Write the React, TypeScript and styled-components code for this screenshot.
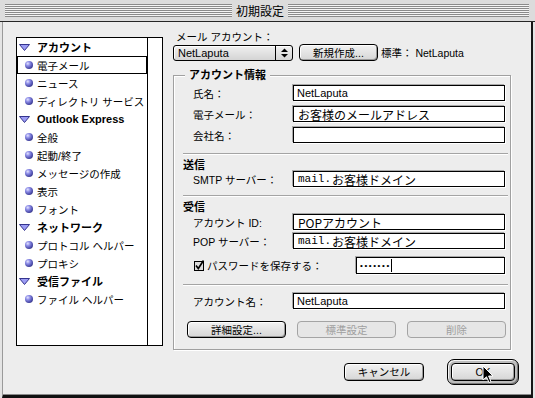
import { createGlobalStyle } from 'styled-components';
import styled from 'styled-components';

const GlobalStyle = createGlobalStyle`
  body {
    margin: 0;
    font-family: 'Liberation Sans', 'Noto Sans CJK JP', sans-serif;
    color: #000;
  }
`;

const Window = styled.div`
  position: relative;
  width: 535px;
  height: 398px;
  display: flex;
  flex-direction: column;
  background: #e4e4e4;
  overflow: hidden;
`;

const TitleBar = styled.div`
  height: 22px;
  box-sizing: border-box;
  padding: 4px 6px 4px 5px;
  display: flex;
  align-items: center;
  background: #dcdcdc;
  border-bottom: 1px solid #262626;
`;

const Stripes = styled.div<{ $width?: number }>`
  height: 13px;
  flex: ${(p) => (p.$width ? `0 0 ${p.$width}px` : '1')};
  background: repeating-linear-gradient(to bottom, #8a8a8a 0 1px, #f4f4f4 1px 2px);
`;

const Title = styled.div`
  padding: 0 4px;
  font-family: 'Noto Sans CJK JP', sans-serif;
  font-size: 12px;
  line-height: 13px;
`;

const Body = styled.div`
  flex: 1;
  margin: 0 2px;
  box-sizing: border-box;
  background: #ededed;
  border-left: 1px solid #9a9a9a;
  border-right: 2px solid #161616;
  border-bottom: 3px solid #111;
  box-shadow: inset 0 -1px 0 #8a8a8a;
  padding: 9px 12px 0 13px;
  display: flex;
  flex-direction: column;
`;

const Main = styled.div`
  display: flex;
  align-items: flex-start;
  gap: 10px;
`;

const Sidebar = styled.div`
  margin-top: 6px;
  width: 147px;
  height: 309px;
  box-sizing: border-box;
  border: 1px solid #000;
  background: #fff;
  display: flex;
`;

const List = styled.div`
  flex: 1;
  display: flex;
  flex-direction: column;
`;

const ScrollTrack = styled.div`
  width: 14px;
  border-left: 1px solid #000;
`;

const Row = styled.div<{ $header?: boolean; $selected?: boolean }>`
  height: 18px;
  box-sizing: border-box;
  display: flex;
  align-items: center;
  gap: ${(p) => (p.$header ? 7 : 4)}px;
  padding-left: ${(p) => (p.$header ? 1 : 7)}px;
  border: 1px solid ${(p) => (p.$selected ? '#000' : 'transparent')};
  font-size: ${(p) => (p.$header ? 11 : 10.5)}px;
  font-weight: ${(p) => (p.$header ? 700 : 400)};
  white-space: nowrap;
`;

const Bullet = styled.span`
  width: 8px;
  height: 8px;
  border-radius: 50%;
  background: radial-gradient(circle at 35% 32%, #e4e4ff 0, #8c8ce6 30%, #4a4aa8 65%, #24245e 100%);
`;

const Disclosure = () => (
  <svg width='11' height='7' viewBox='0 0 11 7'>
    <polygon points='0.5,0.5 10.5,0.5 5.5,6.5' fill='#9c9cf4' stroke='#34348e' />
  </svg>
);

const RightPanel = styled.div`
  width: 338px;
  display: flex;
  flex-direction: column;
`;

const SmallLabel = styled.div`
  font-size: 10.5px;
  line-height: 13px;
  height: 13px;
  padding-left: 3px;
  white-space: nowrap;
`;

const AccountRow = styled.div`
  display: flex;
  align-items: center;
  height: 17px;
`;

const Popup = styled.div`
  width: 120px;
  height: 16px;
  box-sizing: border-box;
  border: 1px solid #000;
  border-radius: 3px;
  background: linear-gradient(#f0f0f0, #d4d4d4);
  box-shadow: inset 1px 1px 0 #fff;
  display: flex;
`;

const PopupText = styled.div`
  flex: 1;
  padding-left: 4px;
  font-size: 11px;
  line-height: 14px;
`;

const PopupArrows = styled.div`
  width: 16px;
  border-left: 1px solid #000;
  display: flex;
  align-items: center;
  justify-content: center;
`;

const PushButton = styled.button<{ $width?: number; $height?: number }>`
  width: ${(p) => (p.$width ? `${p.$width}px` : 'auto')};
  height: ${(p) => p.$height ?? 17}px;
  flex: ${(p) => (p.$width ? 'none' : '1')};
  box-sizing: border-box;
  padding: 0;
  border: 1px solid #000;
  border-radius: 4px;
  background: linear-gradient(#f2f2f2, #d6d6d6);
  box-shadow: inset 1px 1px 0 #fff, inset -1px -1px 0 #9a9a9a;
  font-family: 'Liberation Sans', 'Noto Sans CJK JP', sans-serif;
  font-size: 10.5px;
  line-height: 14px;
  color: #000;
  white-space: nowrap;

  &:disabled {
    border-color: #a4a4a4;
    color: #a0a0a0;
    background: #e6e6e6;
    box-shadow: none;
  }
`;

const DefaultText = styled.div`
  margin-left: 3px;
  font-size: 10.5px;
  white-space: nowrap;
`;

const Group = styled.div`
  margin-top: 14px;
  border: 1px solid #a0a0a0;
  box-shadow: 1px 1px 0 #fff, inset 1px 1px 0 #fff;
  padding: 0 5px 11px 9px;
  display: flex;
  flex-direction: column;
`;

const GroupTitle = styled.div`
  align-self: flex-start;
  margin: -7px 0 0 2px;
  padding: 0 4px;
  background: #ededed;
  font-size: 11px;
  font-weight: 700;
  line-height: 13px;
`;

const SectionTitle = styled.div`
  margin-top: 5px;
  font-size: 11px;
  font-weight: 700;
  line-height: 12px;
`;

const Separator = styled.div<{ $top: number }>`
  margin: ${(p) => p.$top}px -3px 0 0;
  height: 1px;
  background: #a4a4a4;
  box-shadow: 0 1px 0 #fff;
`;

const FieldRow = styled.div<{ $top: number; $height?: number }>`
  margin-top: ${(p) => p.$top}px;
  height: ${(p) => p.$height ?? 16}px;
  display: flex;
  align-items: center;
`;

const FieldLabel = styled.div<{ $width?: number }>`
  width: ${(p) => p.$width ?? 110}px;
  padding-left: 10px;
  box-sizing: border-box;
  font-size: 10.5px;
  white-space: nowrap;
  display: flex;
  align-items: center;
  gap: 2px;
`;

const TextBox = styled.div`
  flex: 1;
  align-self: stretch;
  box-sizing: border-box;
  border: 1px solid #000;
  background: #fff;
  box-shadow: 1px 1px 0 #fff, -1px -1px 0 #a8a8a8;
  padding-left: 3px;
  display: flex;
  align-items: center;
  white-space: nowrap;
  overflow: hidden;
`;

const Latin = styled.span`
  font-size: 11px;
`;

const Wide = styled.span`
  font-family: 'Noto Sans CJK JP', sans-serif;
  font-size: 12px;
  padding-left: 1px;
`;

const Mono = styled.span`
  font-family: 'Liberation Mono', monospace;
  font-size: 11px;
  padding-left: 1px;
`;

const Dots = styled.span`
  font-size: 8px;
  letter-spacing: 1.6px;
`;

const Caret = styled.span`
  width: 1px;
  height: 13px;
  background: #000;
`;

const ButtonRow = styled.div`
  margin: 12px -1px 0 4px;
  display: flex;
  gap: 11px;
`;

const Footer = styled.div`
  margin-top: 9px;
  display: flex;
  justify-content: flex-end;
  align-items: center;
  gap: 23px;
`;

const DefaultRing = styled.div`
  border: 1px solid #000;
  border-radius: 7px;
  padding: 3px;
  background: #bcbcbc;
  box-shadow: inset 1px 1px 0 #f4f4f4, inset -1px -1px 0 #7a7a7a;
  display: flex;
`;

const Cursor = styled.svg`
  position: absolute;
  left: 482px;
  top: 365px;
`;

const tree = [
  { label: 'アカウント', header: true },
  { label: '電子メール', selected: true },
  { label: 'ニュース' },
  { label: 'ディレクトリ サービス' },
  { label: 'Outlook Express', header: true },
  { label: '全般' },
  { label: '起動/終了' },
  { label: 'メッセージの作成' },
  { label: '表示' },
  { label: 'フォント' },
  { label: 'ネットワーク', header: true },
  { label: 'プロトコル ヘルパー' },
  { label: 'プロキシ' },
  { label: '受信ファイル', header: true },
  { label: 'ファイル ヘルパー' },
];

export default function App() {
  return (
    <Window>
      <GlobalStyle />
      <TitleBar>
        <Stripes $width={227} />
        <Title>初期設定</Title>
        <Stripes />
      </TitleBar>

      <Body>
        <Main>
          <Sidebar>
            <List>
              {tree.map((item) => (
                <Row key={item.label} $header={item.header} $selected={item.selected}>
                  {item.header ? <Disclosure /> : <Bullet />}
                  {item.label}
                </Row>
              ))}
            </List>
            <ScrollTrack />
          </Sidebar>

          <RightPanel>
            <SmallLabel>メール アカウント：</SmallLabel>
            <AccountRow>
              <Popup>
                <PopupText>NetLaputa</PopupText>
                <PopupArrows>
                  <svg width='7' height='10' viewBox='0 0 7 10'>
                    <polygon points='0,4 3.5,0.5 7,4' fill='#000' />
                    <polygon points='0,6 3.5,9.5 7,6' fill='#000' />
                  </svg>
                </PopupArrows>
              </Popup>
              <PushButton $width={79} style={{ marginLeft: 6 }}>新規作成...</PushButton>
              <DefaultText>標準： NetLaputa</DefaultText>
            </AccountRow>

            <Group>
              <GroupTitle>アカウント情報</GroupTitle>
              <FieldRow $top={3}>
                <FieldLabel>氏名：</FieldLabel>
                <TextBox>
                  <Latin>NetLaputa</Latin>
                </TextBox>
              </FieldRow>
              <FieldRow $top={5}>
                <FieldLabel>電子メール：</FieldLabel>
                <TextBox>
                  <Wide>お客様のメールアドレス</Wide>
                </TextBox>
              </FieldRow>
              <FieldRow $top={5}>
                <FieldLabel>会社名：</FieldLabel>
                <TextBox />
              </FieldRow>

              <Separator $top={10} />
              <SectionTitle>送信</SectionTitle>
              <FieldRow $top={0}>
                <FieldLabel>SMTP サーバー：</FieldLabel>
                <TextBox>
                  <Mono>mail.</Mono>
                  <Wide>お客様ドメイン</Wide>
                </TextBox>
              </FieldRow>

              <Separator $top={8} />
              <SectionTitle>受信</SectionTitle>
              <FieldRow $top={1}>
                <FieldLabel>アカウント ID:</FieldLabel>
                <TextBox>
                  <Wide>POPアカウント</Wide>
                </TextBox>
              </FieldRow>
              <FieldRow $top={3}>
                <FieldLabel>POP サーバー：</FieldLabel>
                <TextBox>
                  <Mono>mail.</Mono>
                  <Wide>お客様ドメイン</Wide>
                </TextBox>
              </FieldRow>
              <FieldRow $top={8} $height={17}>
                <FieldLabel $width={173}>
                  <svg width='11' height='11' viewBox='0 0 11 11' style={{ marginLeft: 1 }}>
                    <rect x='0.5' y='1.5' width='9' height='9' fill='#dcdcdc' stroke='#000' />
                    <path d='M2 5.5 L4.3 8.5 L9.5 0.5' fill='none' stroke='#000' strokeWidth='1.6' />
                  </svg>
                  パスワードを保存する：
                </FieldLabel>
                <TextBox>
                  <Dots>•••••••</Dots>
                  <Caret />
                </TextBox>
              </FieldRow>

              <Separator $top={10} />
              <FieldRow $top={8}>
                <FieldLabel>アカウント名：</FieldLabel>
                <TextBox>
                  <Latin>NetLaputa</Latin>
                </TextBox>
              </FieldRow>

              <ButtonRow>
                <PushButton>詳細設定...</PushButton>
                <PushButton disabled>標準設定</PushButton>
                <PushButton disabled>削除</PushButton>
              </ButtonRow>
            </Group>
          </RightPanel>
        </Main>

        <Footer>
          <PushButton $width={80} $height={18}>キャンセル</PushButton>
          <DefaultRing>
            <PushButton $width={64} $height={18}>OK</PushButton>
          </DefaultRing>
        </Footer>
      </Body>

      <Cursor width='12' height='19' viewBox='0 0 12 19'>
        <path d='M1 1 L1 15 L4.5 11.8 L7 17.5 L9 16.6 L6.6 11 L11 11 Z' fill='#000' stroke='#fff' strokeWidth='1' />
      </Cursor>
    </Window>
  );
}
